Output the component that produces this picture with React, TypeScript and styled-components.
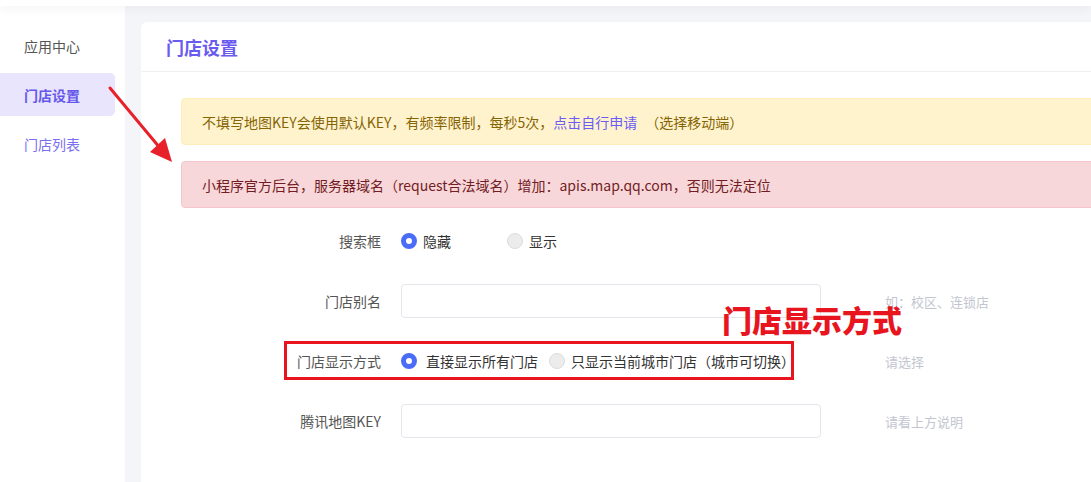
import React from "react";
import styled, { createGlobalStyle } from "styled-components";

const GlobalStyle = createGlobalStyle`
  html, body { margin: 0; padding: 0; height: 100%; overflow: hidden; }
  body {
    font-family: "Noto Sans CJK SC", "Noto Sans", sans-serif;
    background: #f4f5f9;
    color: #333;
  }
  #root { height: 100%; }
`;

const Page = styled.div`
  position: relative;
  width: 1091px;
  height: 482px;
  display: flex;
  flex-direction: column;
  overflow: hidden;
`;

const TopBar = styled.div`
  height: 6px;
  flex: none;
  background: #fff;
  box-shadow: 0 3px 10px rgba(0, 0, 0, 0.06);
  position: relative;
  z-index: 2;
`;

const Body = styled.div`
  flex: 1;
  display: flex;
  min-height: 0;
`;

const Sidebar = styled.nav`
  width: 125px;
  flex: none;
  background: #fff;
  padding-top: 18px;
  box-sizing: border-box;
  display: flex;
  flex-direction: column;
  gap: 6px;
`;

const NavItem = styled.div<{ $active?: boolean; $tone?: "gray" | "purple" }>`
  width: 115px;
  height: 43px;
  box-sizing: border-box;
  padding-left: 24px;
  display: flex;
  align-items: center;
  font-size: 14px;
  border-radius: 0 5px 5px 0;
  background: ${(p) => (p.$active ? "#e8e5fd" : "transparent")};
  color: ${(p) => (p.$active ? "#6657ea" : p.$tone === "purple" ? "#7a6ff0" : "#555")};
  font-weight: ${(p) => (p.$active ? 700 : 400)};
`;

const Main = styled.main`
  flex: 1;
  padding: 16px 0 0 16px;
  min-width: 0;
`;

const Card = styled.section`
  width: 1000px;
  height: 100%;
  background: #fff;
  border-radius: 6px 6px 0 0;
`;

const CardHeader = styled.header`
  height: 50px;
  box-sizing: border-box;
  border-bottom: 1px solid #eef0f4;
  padding-left: 25px;
  display: flex;
  align-items: center;
`;

const Title = styled.h1`
  margin: 0;
  font-size: 18px;
  font-weight: 700;
  color: #6a5bf0;
`;

const CardBody = styled.div`
  padding: 26px 40px 0 40px;
  display: flex;
  flex-direction: column;
`;

const Alert = styled.div<{ $kind: "warning" | "danger" }>`
  height: 47px;
  box-sizing: border-box;
  padding: 0 20px;
  display: flex;
  align-items: center;
  font-size: 14px;
  border-radius: 4px;
  margin-bottom: 16px;
  border: 1px solid ${(p) => (p.$kind === "warning" ? "#ffeeba" : "#f5c6cb")};
  background: ${(p) => (p.$kind === "warning" ? "#fff3cd" : "#f8d7da")};
  color: ${(p) => (p.$kind === "warning" ? "#856404" : "#721c24")};
`;

const Link = styled.span`
  color: #6a5cf5;
  margin-right: 8px;
`;

const Form = styled.div`
  display: flex;
  flex-direction: column;
  gap: 26px;
`;

const Row = styled.div`
  height: 34px;
  display: grid;
  grid-template-columns: 200px 420px auto;
  column-gap: 20px;
  align-items: center;
`;

const Label = styled.label`
  text-align: right;
  font-size: 14px;
  color: #555;
`;

const Control = styled.div`
  display: flex;
  align-items: center;
`;

const Input = styled.input`
  width: 420px;
  height: 34px;
  box-sizing: border-box;
  border: 1px solid #e4e6eb;
  border-radius: 4px;
  outline: none;
  background: #fff;
`;

const Hint = styled.span`
  margin-left: 44px;
  font-size: 13px;
  color: #c3c6d0;
  white-space: nowrap;
`;

const RadioOption = styled.span<{ $width?: number; $gap?: number }>`
  display: inline-flex;
  align-items: center;
  gap: ${(p) => p.$gap ?? 6}px;
  ${(p) => (p.$width ? `width: ${p.$width}px;` : "")}
  font-size: 14px;
  color: #333;
  white-space: nowrap;
`;

const RadioDot = styled.span<{ $checked?: boolean }>`
  width: 16px;
  height: 16px;
  box-sizing: border-box;
  border-radius: 50%;
  flex: none;
  ${(p) =>
    p.$checked
      ? "background: #fff; border: 5px solid #4a6cf7;"
      : "background: #ececec; border: 1px solid #dcdcdc;"}
`;

const Annotation = styled.div`
  position: absolute;
  left: 284px;
  top: 341px;
  width: 510px;
  height: 39px;
  box-sizing: border-box;
  border: 3px solid #e8141e;
  pointer-events: none;
`;

const AnnotationText = styled.div`
  position: absolute;
  left: 722px;
  top: 299px;
  font-size: 30px;
  font-weight: 900;
  color: #e8141e;
  letter-spacing: 0;
  line-height: 40px;
  white-space: nowrap;
`;

const ArrowSvg = styled.svg`
  position: absolute;
  left: 100px;
  top: 80px;
  overflow: visible;
`;

function Radio({
  checked,
  label,
  width,
  gap,
}: {
  checked?: boolean;
  label: string;
  width?: number;
  gap?: number;
}) {
  return (
    <RadioOption $width={width} $gap={gap}>
      <RadioDot $checked={checked} />
      {label}
    </RadioOption>
  );
}

export default function App() {
  return (
    <>
      <GlobalStyle />
      <Page>
        <TopBar />
        <Body>
          <Sidebar>
            <NavItem>应用中心</NavItem>
            <NavItem $active>门店设置</NavItem>
            <NavItem $tone="purple">门店列表</NavItem>
          </Sidebar>
          <Main>
            <Card>
              <CardHeader>
                <Title>门店设置</Title>
              </CardHeader>
              <CardBody>
                <Alert $kind="warning">
                  不填写地图KEY会使用默认KEY，有频率限制，每秒5次，
                  <Link>点击自行申请</Link>（选择移动端）
                </Alert>
                <Alert $kind="danger">
                  小程序官方后台，服务器域名（request合法域名）增加：apis.map.qq.com，否则无法定位
                </Alert>
                <Form>
                  <Row>
                    <Label>搜索框</Label>
                    <Control>
                      <Radio checked label="隐藏" width={106} />
                      <Radio label="显示" />
                    </Control>
                  </Row>
                  <Row>
                    <Label>门店别名</Label>
                    <Input />
                    <Hint>如：校区、连锁店</Hint>
                  </Row>
                  <Row>
                    <Label>门店显示方式</Label>
                    <Control>
                      <Radio checked label="直接显示所有门店" width={148} gap={9} />
                      <Radio label="只显示当前城市门店（城市可切换）" />
                    </Control>
                    <Hint>请选择</Hint>
                  </Row>
                  <Row>
                    <Label>腾讯地图KEY</Label>
                    <Input />
                    <Hint>请看上方说明</Hint>
                  </Row>
                </Form>
              </CardBody>
            </Card>
          </Main>
        </Body>
        <Annotation />
        <AnnotationText>门店显示方式</AnnotationText>
        <ArrowSvg width="80" height="90" viewBox="0 0 80 90">
          <line x1="10" y1="8" x2="60" y2="68" stroke="#e8202a" strokeWidth="3" strokeLinecap="round" />
          <polygon points="72,82 50,72 65,58" fill="#e8202a" />
        </ArrowSvg>
      </Page>
    </>
  );
}
